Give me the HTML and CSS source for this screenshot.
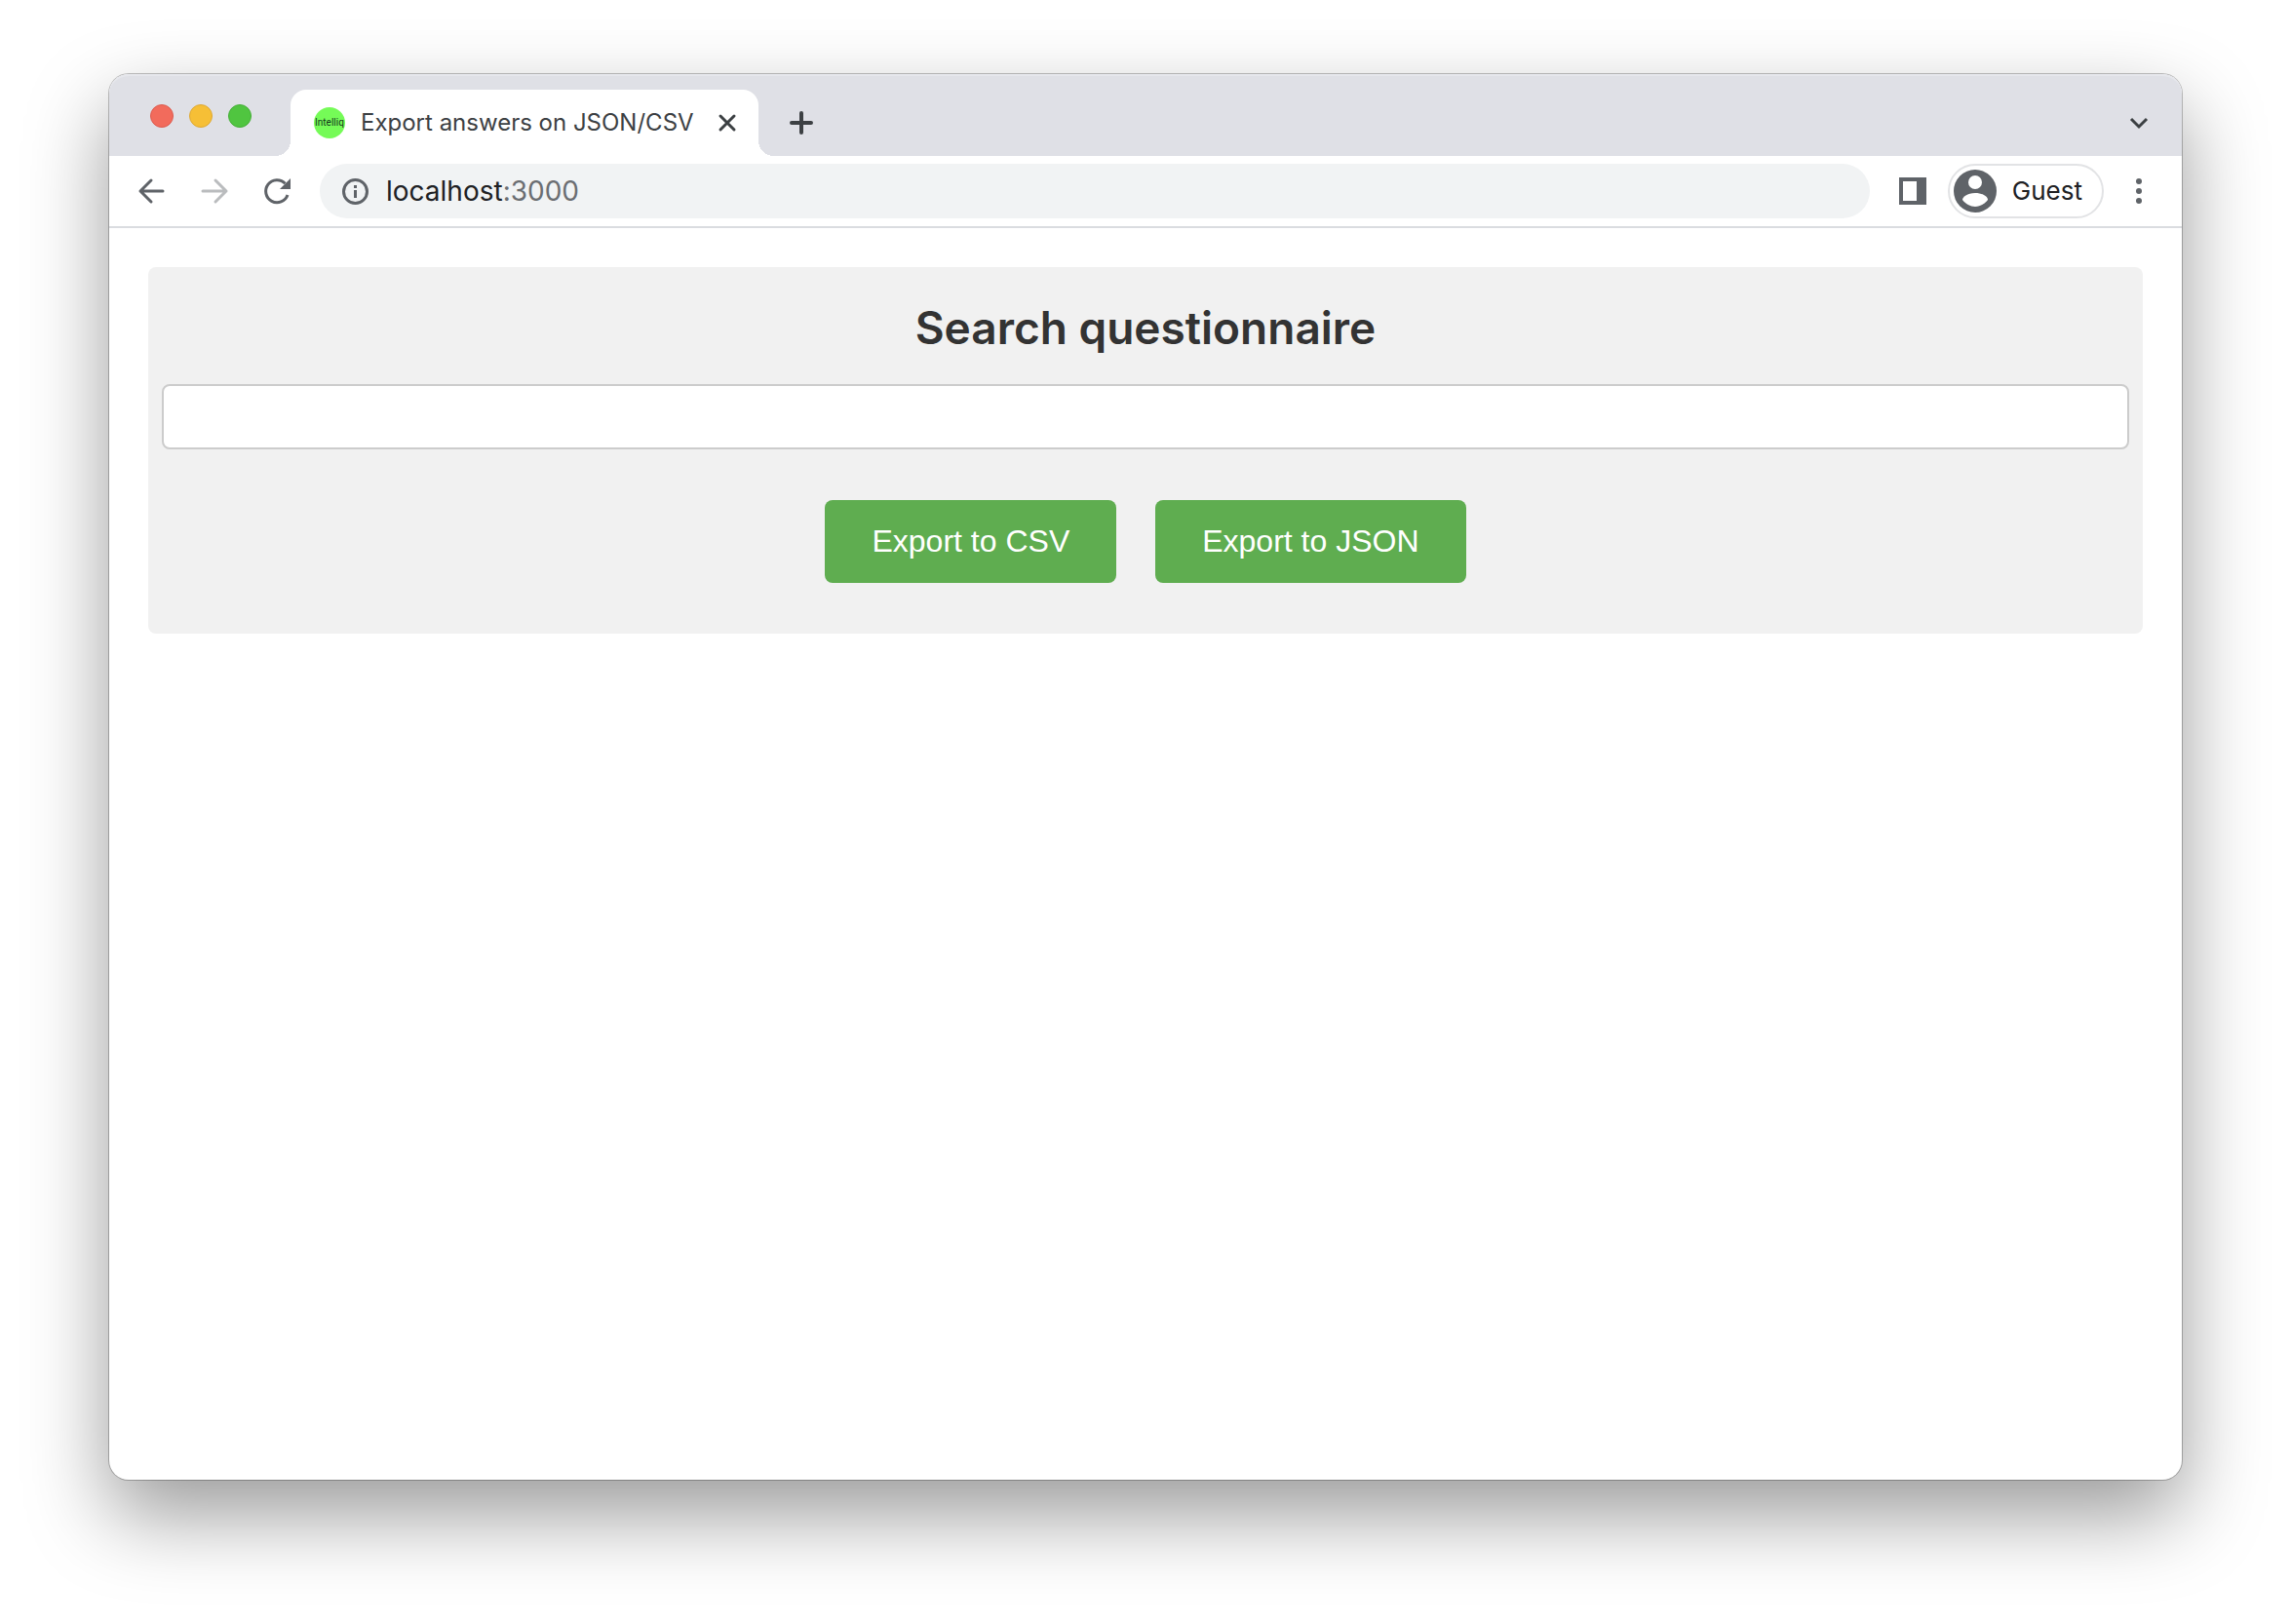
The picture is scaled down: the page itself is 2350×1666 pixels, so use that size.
FILE: index.html
```html
<!DOCTYPE html>
<html lang="en">
<head>
  <meta charset="utf-8">
  <meta name="viewport" content="width=device-width, initial-scale=1">
  <title>Export answers on JSON/CSV</title>
  <link rel="stylesheet" href="styles.css">
</head>
<body>
  <div class="window">
    <header class="tab-strip">
      <div class="traffic-lights">
        <button class="light light-close" type="button" aria-label="Close window"></button>
        <button class="light light-minimise" type="button" aria-label="Minimise window"></button>
        <button class="light light-zoom" type="button" aria-label="Zoom window"></button>
      </div>
      <div class="tab">
        <span class="favicon">Intelliq</span>
        <span class="tab-title">Export answers on JSON/CSV</span>
        <button class="icon-button" type="button" aria-label="Close tab">
          <svg width="32" height="32" viewBox="0 0 32 32" fill="none" stroke="#3c4043" stroke-width="3" stroke-linecap="round"><path d="M9 9L23 23M23 9L9 23"/></svg>
        </button>
      </div>
      <button class="icon-button new-tab" type="button" aria-label="New tab">
        <svg width="32" height="32" viewBox="0 0 32 32" fill="none" stroke="#3c4043" stroke-width="4" stroke-linecap="round"><path d="M16 6V26M6 16H26"/></svg>
      </button>
      <button class="icon-button tab-search" type="button" aria-label="Search tabs">
        <svg width="32" height="32" viewBox="0 0 32 32" fill="none" stroke="#3c4043" stroke-width="3"><path d="M8 12L16 20L24 12"/></svg>
      </button>
    </header>

    <nav class="toolbar" aria-label="Browser toolbar">
      <div class="nav-buttons">
        <button class="icon-button" type="button" aria-label="Back">
          <svg width="32" height="32" viewBox="0 0 32 32" fill="none" stroke="#5f6368" stroke-width="3" stroke-linecap="round" stroke-linejoin="round"><path d="M27 16H4M15 5L4 16L15 27"/></svg>
        </button>
        <button class="icon-button" type="button" aria-label="Forward" disabled>
          <svg width="32" height="32" viewBox="0 0 32 32" fill="none" stroke="#babcbe" stroke-width="3" stroke-linecap="round" stroke-linejoin="round"><path d="M4 16H28M17 5L28 16L17 27"/></svg>
        </button>
        <button class="icon-button" type="button" aria-label="Reload">
          <svg width="32" height="32" viewBox="0 0 32 32"><path d="M27 20A11.500 11.500 0 1 1 24.500 8.300" fill="none" stroke="#5f6368" stroke-width="3"/><path d="M30 3V14H19Z" fill="#5f6368"/></svg>
        </button>
      </div>
      <div class="address-bar">
        <svg width="32" height="32" viewBox="0 0 32 32" aria-hidden="true"><circle cx="16.500" cy="16.500" r="12" fill="none" stroke="#5f6368" stroke-width="3"/><path d="M15 15H18V23H15ZM15 10H18V13H15Z" fill="#5f6368"/></svg>
        <div class="url" role="textbox" contenteditable="true" spellcheck="false" aria-label="Address">localhost<span class="url-port">:3000</span></div>
      </div>
      <button class="icon-button side-panel" type="button" aria-label="Side panel">
        <svg width="32" height="32" viewBox="0 0 32 32"><path fill="#5f6368" fill-rule="evenodd" d="M2 2H30V30H2ZM6 6V26H20V6Z"/></svg>
      </button>
      <button class="profile" type="button">
        <svg width="44" height="44" viewBox="0 0 44 44" aria-hidden="true"><circle cx="22" cy="22" r="22" fill="#5f6368"/><circle cx="22" cy="13" r="7" fill="#fff"/><path d="M22 24C30 24 35 28 35 31C32 35 27 38 22 38C17 38 12 35 9 31C9 28 14 24 22 24Z" fill="#fff"/></svg>
        <span>Guest</span>
      </button>
      <button class="icon-button" type="button" aria-label="Menu">
        <svg width="32" height="32" viewBox="0 0 32 32" fill="#5f6368"><circle cx="16" cy="6" r="3"/><circle cx="16" cy="16" r="3"/><circle cx="16" cy="26" r="3"/></svg>
      </button>
    </nav>

    <main class="page">
      <form class="card">
        <label class="card-title" for="questionnaire">Search questionnaire</label>
        <input class="search" id="questionnaire" type="text">
        <div class="actions">
          <button class="export" type="button">Export to CSV</button>
          <button class="export" type="button">Export to JSON</button>
        </div>
      </form>
    </main>
  </div>
</body>
</html>
```

FILE: styles.css
```css
* {
  box-sizing: border-box;
}

body {
  margin: 0;
  min-height: 100vh;
  padding: 76px 112px 148px;
  display: flex;
  background: #fff;
  font-family: Inter, "Liberation Sans", sans-serif;
}

button {
  border: 0;
  padding: 0;
  background: none;
  font: inherit;
}

svg {
  display: block;
  flex: none;
}

.window {
  flex: 1;
  min-width: 0;
  display: flex;
  flex-direction: column;
  border-radius: 20px;
  background: #fff;
  box-shadow: 0 0 0 1px rgba(0, 0, 0, 0.24), 0 36px 84px rgba(0, 0, 0, 0.4);
}

/* Tab strip */

.tab-strip {
  display: flex;
  height: 84px;
  padding: 0 28px 0 42px;
  border-radius: 20px 20px 0 0;
  background: #dfe0e6;
  box-shadow: inset 0 2px 0 #e6e7ec;
}

.traffic-lights {
  display: flex;
  gap: 16px;
  margin: 31px 40px 0 0;
}

.light {
  width: 24px;
  height: 24px;
  border: 1px solid;
  border-radius: 50%;
}

.light-close {
  background: #f26b5c;
  border-color: #dc5a4e;
}

.light-minimise {
  background: #f6bf36;
  border-color: #dea832;
}

.light-zoom {
  background: #50c540;
  border-color: #44ae36;
}

.tab {
  position: relative;
  display: flex;
  align-items: center;
  width: 480px;
  margin-top: 16px;
  padding: 0 16px 0 24px;
  border-radius: 16px 16px 0 0;
  background: #fff;
}

/* Flared feet where the tab meets the toolbar */
.tab::before,
.tab::after {
  content: "";
  position: absolute;
  bottom: 0;
  width: 16px;
  height: 16px;
}

.tab::before {
  right: 100%;
  background: radial-gradient(circle at 0 0, transparent 16px, #fff 16px);
}

.tab::after {
  left: 100%;
  background: radial-gradient(circle at 100% 0, transparent 16px, #fff 16px);
}

.favicon {
  display: flex;
  align-items: center;
  justify-content: center;
  width: 32px;
  height: 32px;
  margin-right: 16px;
  border-radius: 50%;
  background: #75fb57;
  color: #12351c;
  font: 400 10px/12px Roboto, sans-serif;
}

.tab-title {
  flex: 1;
  color: #3c4043;
  font-size: 24px;
  line-height: 32px;
  white-space: nowrap;
}

.icon-button {
  flex: none;
  width: 32px;
  height: 32px;
}

.new-tab {
  margin: 34px 0 0 28px;
}

.tab-search {
  margin: 34px 0 0 auto;
}

/* Toolbar */

.toolbar {
  display: flex;
  align-items: center;
  height: 74px;
  padding: 0 28px;
  border-bottom: 2px solid #dadce0;
}

.nav-buttons {
  display: flex;
  gap: 32px;
  margin-right: 28px;
}

.address-bar {
  flex: 1;
  display: flex;
  align-items: center;
  gap: 16px;
  height: 56px;
  padding: 0 20px;
  border-radius: 28px;
  background: #f1f3f4;
}

.url {
  flex: 1;
  color: #202124;
  font-size: 28px;
  line-height: 36px;
  outline: none;
}

.url-port {
  color: #6b6e72;
}

.side-panel {
  margin: 0 20px 0 28px;
}

.profile {
  display: flex;
  align-items: center;
  gap: 16px;
  height: 56px;
  margin-right: 20px;
  padding: 0 20px 0 4px;
  border: 2px solid #e2e3e5;
  border-radius: 28px;
  color: #202124;
  font-size: 26px;
  line-height: 32px;
}

/* Page */

.page {
  padding: 40px;
}

.card {
  padding: 32px 14px 52px;
  border-radius: 8px;
  background: #f1f1f1;
}

.card-title {
  display: block;
  margin-bottom: 28px;
  color: #333;
  font-size: 46px;
  font-weight: 600;
  line-height: 60px;
  text-align: center;
}

.search {
  display: block;
  width: 100%;
  height: 67px;
  padding: 12px;
  border: 2px solid #ccc;
  border-radius: 8px;
  background: #fff;
  font: 28px/36px "Liberation Sans", sans-serif;
}

.actions {
  display: flex;
  justify-content: center;
  gap: 40px;
  margin-top: 52px;
}

.export {
  padding: 24px 48px;
  border-radius: 8px;
  background: #5fad50;
  color: #fff;
  font: 32px/37px "Liberation Sans", Arial, sans-serif;
}
```
